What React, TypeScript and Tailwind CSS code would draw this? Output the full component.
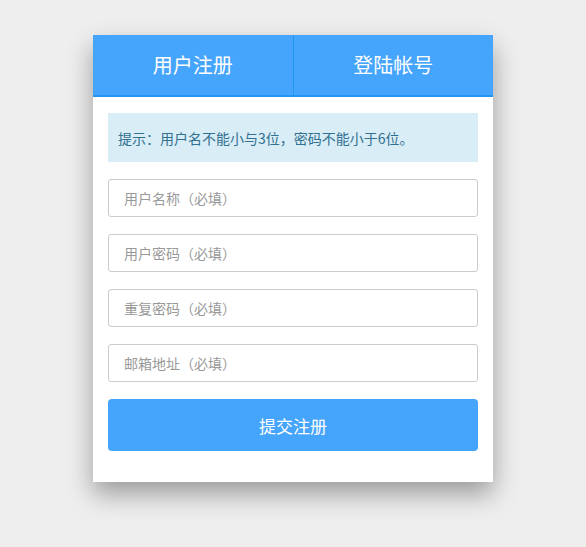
import React from "react";

export default function App() {
  const fields = ["用户名称（必填）", "用户密码（必填）", "重复密码（必填）", "邮箱地址（必填）"];
  return (
    <div
      className="min-h-[547px] w-full bg-[#eeeeee] pt-[35px]"
      style={{ fontFamily: '"Noto Sans CJK SC", "Noto Sans", sans-serif' }}
    >
      <div className="mx-auto w-[400px] bg-white shadow-[0_12px_24px_rgba(0,0,0,0.35)]">
        <div className="flex h-[62px] border-b-2 border-[#2196f3] bg-[#45a4fc]">
          <div className="flex flex-1 items-center justify-center border-r border-[#2196f3] text-[20px] leading-none text-white">
            用户注册
          </div>
          <div className="flex flex-1 items-center justify-center text-[20px] leading-none text-white">
            登陆帐号
          </div>
        </div>
        <div className="flex flex-col gap-[17px] px-[15px] pb-[31px] pt-[16px]">
          <div className="flex h-[49px] items-center bg-[#d9edf7] px-[10px] text-[14px] leading-none text-[#31708f]">
            提示：用户名不能小与3位，密码不能小于6位。
          </div>
          {fields.map((f) => (
            <input
              key={f}
              placeholder={f}
              className="h-[38px] w-full rounded-[3px] border border-[#cccccc] px-[15px] text-[14px] text-[#555] placeholder:text-[#999999] outline-none"
              style={{ fontFamily: '"Noto Sans CJK SC", "Noto Sans", sans-serif' }}
            />
          ))}
          <button className="flex h-[52px] w-full items-center justify-center rounded-[4px] bg-[#45a4fc] text-[17px] leading-none text-white">
            提交注册
          </button>
        </div>
      </div>
    </div>
  );
}
